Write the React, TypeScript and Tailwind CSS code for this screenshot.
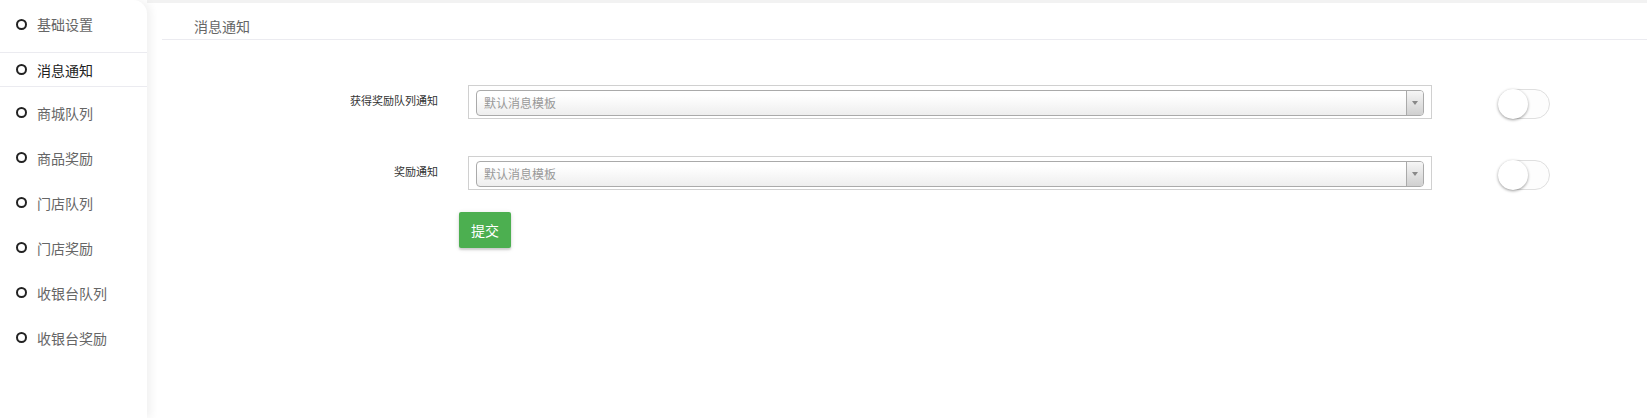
import React, { useState } from "react";

const menus = ["商城队列", "商品奖励", "门店队列", "门店奖励", "收银台队列", "收银台奖励"];

const rows = [
    { label: "获得奖励队列通知" },
    { label: "奖励通知" },
];

function Dot() {
    return <span className="block h-[11px] w-[11px] shrink-0 rounded-full border-2 border-[#222]"></span>;
}

function Toggle() {
    const [on, setOn] = useState(false);
    return (
        <button
            type="button"
            onClick={() => setOn(!on)}
            className={`relative block h-[30px] w-[52px] shrink-0 rounded-full border border-[#dfdfdf] ${on ? "bg-[#64bd63]" : "bg-[#fdfdfd]"}`}
        >
            <span
                className={`absolute top-[-1px] h-[30px] w-[30px] rounded-full bg-white shadow-[0_1px_3px_rgba(0,0,0,0.4)] ${on ? "left-[21px]" : "left-[-1px]"}`}
            ></span>
        </button>
    );
}

export default function App() {
    return (
        <div className="flex h-[418px] w-full bg-white font-['Noto_Sans_CJK_SC','Noto_Sans',sans-serif]">
            {/* 左侧菜单 */}
            <div className="relative z-10 flex w-[147px] shrink-0 flex-col rounded-tr-[14px] bg-white shadow-[4px_0_8px_rgba(0,0,0,0.06)]">
                <div className="flex h-[53px] items-start gap-[10px] border-b border-[#ebebf0] pl-[16px] pt-[14px] text-[14px] leading-[20px] text-[#666]">
                    <span className="mt-[5px]"><Dot /></span>
                    基础设置
                </div>
                <div className="flex h-[34px] items-center gap-[10px] border-b border-[#ebebf0] pl-[16px] text-[14px] leading-[20px] text-[#222]">
                    <Dot />
                    消息通知
                </div>
                <div className="mt-[3px] flex flex-col">
                    {menus.map((m) => (
                        <div key={m} className="flex h-[45px] items-center gap-[10px] pl-[16px] text-[14px] leading-[20px] text-[#666]">
                            <Dot />
                            {m}
                        </div>
                    ))}
                </div>
            </div>

            {/* 主体 */}
            <div className="flex flex-grow flex-col border-t-[3px] border-[#f2f2f2]">
                <div className="ml-[15px] border-b border-[#ebebf0] pb-[3px] pl-[32px] pt-[13px] text-[14px] leading-[20px] text-[#666]">
                    消息通知
                </div>

                <div className="mt-[45px] flex flex-col gap-[37px]">
                    {rows.map((row) => (
                        <div key={row.label} className="flex h-[34px] items-start">
                            <div className="w-[291px] shrink-0 pt-[8px] text-right text-[11px] leading-[14px] text-[#333]">
                                {row.label}
                            </div>
                            <div className="ml-[30px] w-[964px] shrink-0 border border-[#d0d0d0] pb-[2px] pl-[7px] pr-[7px] pt-[4px]">
                                <div className="flex h-[26px] items-stretch rounded-[4px] border border-[#aaa] bg-gradient-to-b from-white from-20% to-[#eee]">
                                    <div className="flex flex-grow items-center pl-[7px] text-[12px] text-[#999]">默认消息模板</div>
                                    <div className="flex w-[17px] items-center justify-center rounded-r-[3px] border-l border-[#aaa] bg-gradient-to-b from-[#f6f6f6] to-[#d0d0d0]">
                                        <span className="h-0 w-0 border-x-[3px] border-t-[4px] border-x-transparent border-t-[#888]"></span>
                                    </div>
                                </div>
                            </div>
                            <div className="ml-[66px] mt-[4px] flex">
                                <Toggle />
                            </div>
                        </div>
                    ))}
                </div>

                <div className="ml-[312px] mt-[22px] flex">
                    <button
                        type="submit"
                        className="h-[36px] w-[52px] rounded-[2px] bg-[#4caf50] text-[14px] text-white shadow-[0_2px_2px_rgba(0,0,0,0.14),0_1px_5px_rgba(0,0,0,0.12)]"
                    >
                        提交
                    </button>
                </div>
            </div>
        </div>
    );
}
